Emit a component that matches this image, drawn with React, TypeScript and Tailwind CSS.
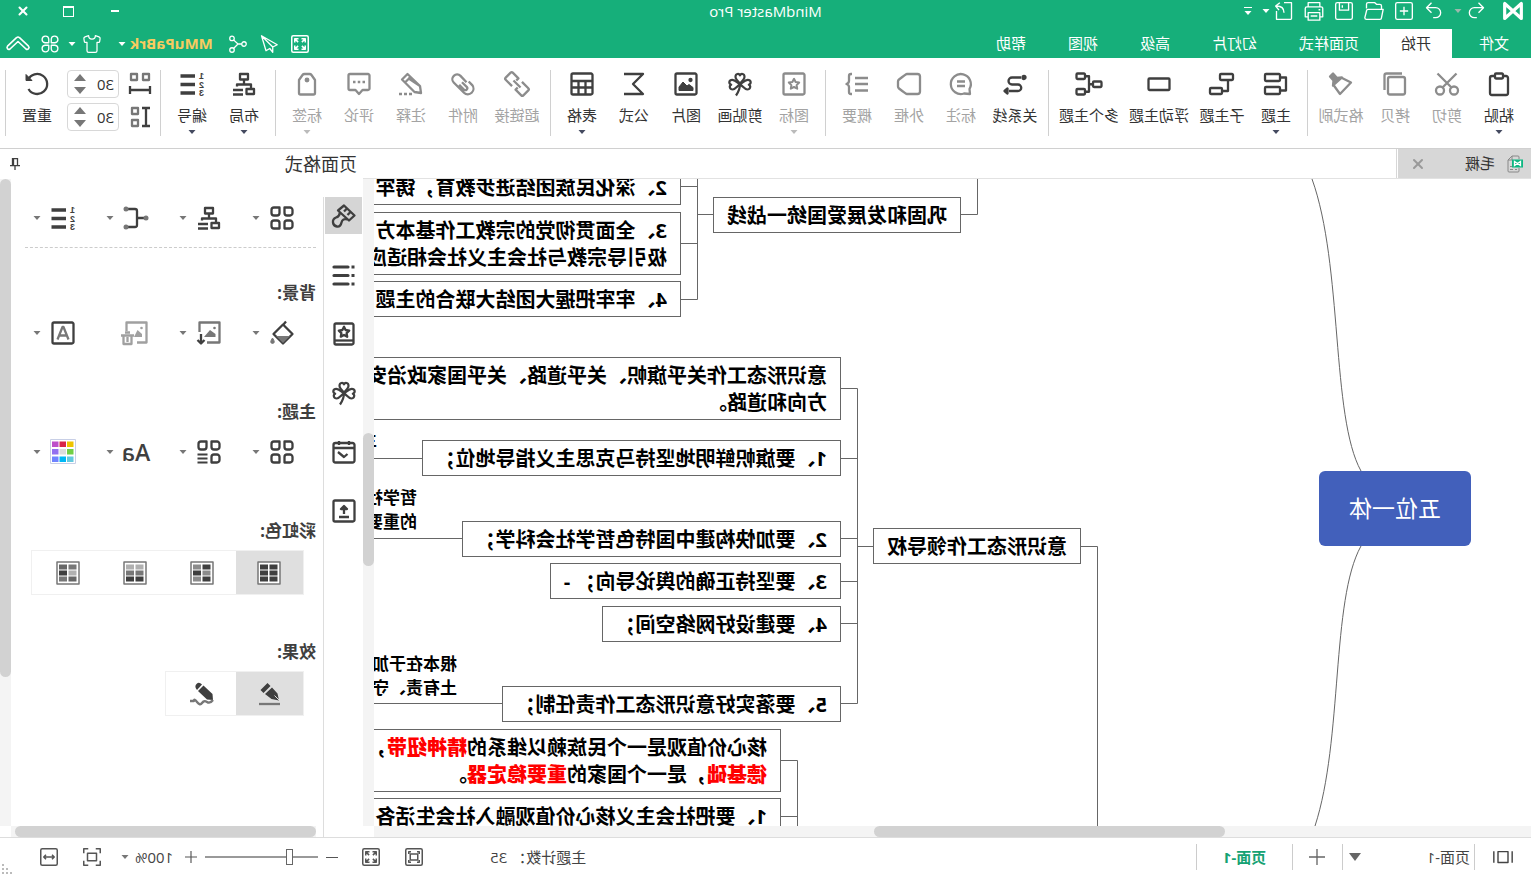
import React, { useState } from 'react';
import { Shirt, X } from 'lucide-react';

interface IcoProps {
  children: React.ReactNode;
  className?: string;
  sw?: number;
}

const Ico: React.FC<IcoProps> = ({ children, className = 'size-6', sw = 2.3 }) => (
  <svg
    viewBox="0 0 24 24"
    className={`${className} shrink-0 overflow-visible`}
    fill="none"
    stroke="currentColor"
    strokeWidth={sw}
    strokeLinejoin="round"
    aria-hidden="true"
  >
    {children}
  </svg>
);

const Caret: React.FC<{ className?: string }> = ({ className = 'text-[#444]' }) => (
  <svg viewBox="0 0 8 4" className={`h-1 w-2 shrink-0 ${className}`} fill="currentColor" aria-hidden="true">
    <path d="M0.5 0h7L4 4z" />
  </svg>
);

const starPath = 'M12 6.8l1.6 3.2 3.6.6-2.6 2.5.6 3.6-3.2-1.7-3.2 1.7.6-3.6-2.6-2.5 3.6-.6z';

const CloverIcon = () => (
  <Ico sw={2.2}>
    <path d="M12 11.5C9.5 9 7.5 7.300 7.500 4.800 7.500 1.500 11 1 12 3.400c1-2.400 4.500-1.900 4.500 1.400 0 2.500-2 4.200-4.500 6.700z" />
    <path d="M12 12.500C9 14 7.500 17.500 4.800 17.500c-3.200 0-4-3.700-1.600-4.800C.2 11.500 1 7.800 4.300 7.800c3 0 4.700 2.500 7.700 4.700zM12 12.500c3 1.500 4.500 5 7.200 5 3.200 0 4-3.700 1.600-4.800 3-1.200 2.200-4.900-1.100-4.900-3 0-4.700 2.500-7.700 4.700z" />
    <path d="M12 12c0 4 1.500 8 4 11.500" />
  </Ico>
);

const LayoutIcon = () => (
  <Ico>
    <path d="M8 2h8v5.500H8zM2 17h7.500v5H2zM12 8v4M5 17v-4.500h14v2M13 18h10M13 22.500h10" />
  </Ico>
);

const NumberIcon = () => (
  <Ico sw={3.3}>
    <path d="M9 4H23.500M9 12.500H23.500M9 21H23.500" />
    <g fill="currentColor" stroke="none" fontFamily="Liberation Sans" fontSize="9" fontWeight="bold">
      <text x="0" y="7">1</text>
      <text x="0" y="15.500">2</text>
      <text x="0" y="24">3</text>
    </g>
  </Ico>
);

const FourIcon: React.FC<{ list?: boolean }> = ({ list }) => (
  <Ico>
    <path d="M1.500 4a2.500 2.500 0 0 1 2.500-2.500h5.500V7A2.500 2.500 0 0 1 7 9.500H4A2.500 2.500 0 0 1 1.500 7zM14.500 1.500H20A2.500 2.500 0 0 1 22.500 4v3A2.500 2.500 0 0 1 20 9.500h-3A2.500 2.500 0 0 1 14.500 7z" />
    <path d="M1.500 17A2.500 2.500 0 0 1 4 14.500h3A2.500 2.500 0 0 1 9.500 17v5.500H4A2.500 2.500 0 0 1 1.500 20z" />
    {list
      ? <path d="M13.500 14.500h10M13.500 18.500h10M13.500 22.500h10" strokeWidth="2" />
      : <path d="M14.500 17a2.500 2.500 0 0 1 2.500-2.500h3a2.500 2.500 0 0 1 2.500 2.500v3a2.500 2.500 0 0 1-2.500 2.500h-5.500z" />}
  </Ico>
);

const FullscreenIcon: React.FC<{ className: string }> = ({ className }) => (
  <Ico className={className} sw={2}>
    <rect x="1" y="1" width="22" height="22" rx="2" />
    <path d="M5 10V5h5M14 5h5v5M19 14v5h-5M10 19H5v-5M5.500 5.500l4 4M18.500 5.500l-4 4M18.500 18.500l-4-4M5.500 18.500l4-4" />
  </Ico>
);

interface Tool {
  label: string;
  icon: React.ReactNode;
  disabled?: boolean;
  caret?: boolean;
}

const toolGroups: Tool[][] = [
  [
    {
      label: '粘贴',
      caret: true,
      icon: <Ico><path d="M8 4H5a2 2 0 0 0-2 2v15a2 2 0 0 0 2 2h14a2 2 0 0 0 2-2V6a2 2 0 0 0-2-2h-3" /><rect x="8" y="1.500" width="8" height="5" rx="1" /></Ico>,
    },
    {
      label: '剪切',
      disabled: true,
      icon: <Ico><path d="M21.500 1.500 7 16M2.500 1.500 17 16" /><circle cx="5" cy="18.500" r="4" /><circle cx="19" cy="18.500" r="4" /></Ico>,
    },
    {
      label: '拷贝',
      disabled: true,
      icon: <Ico><rect x="2" y="5" width="17" height="17.500" rx="2" /><path d="M5 1.500h15.500a2 2 0 0 1 2 2V18" /></Ico>,
    },
    {
      label: '格式刷',
      disabled: true,
      icon: <Ico><path d="M11 6 2 10.500 13 22l6.500-9" /><path d="M11 5.500l5 .5 4-4.500 3 3-3.500 4 .5 5z" fill="currentColor" /></Ico>,
    },
  ],
  [
    { label: '主题', caret: true, icon: <Ico><rect x="8" y="2" width="15" height="7" rx="1" /><rect x="8" y="15" width="15" height="7" rx="1" /><path d="M8 5.500H2v13h6" /></Ico> },
    { label: '子主题', icon: <Ico><rect x="1" y="2" width="13" height="6" rx="1" /><rect x="12" y="16" width="12" height="6" rx="1" /><path d="M6 8v11h6" /></Ico> },
    { label: '浮动主题', icon: <Ico><rect x="1.500" y="6.500" width="21" height="11.500" rx="1" /></Ico> },
    { label: '多个主题', icon: <Ico><rect x="-.5" y="9.500" width="8.500" height="5.500" rx="1" /><rect x="16" y="1.500" width="8.500" height="5.500" rx="1" /><rect x="16" y="17" width="8.500" height="5.500" rx="1" /><path d="M8 12.250h4M16 4.250h-4v15.500h4" /></Ico> },
  ],
  [
    {
      label: '关系线',
      icon: <Ico><path d="M6 5.500h9a3.500 3.500 0 0 1 0 7H9a3.250 3.250 0 0 0 0 6.500h9" /><circle cx="3" cy="5.500" r="1.500" fill="currentColor" /><path d="M19.500 16.500v5l3-2.500z" fill="currentColor" /></Ico>,
    },
    { label: '标注', disabled: true, icon: <Ico><path d="M3 22l.500-5A10 10 0 1 1 9 21.500zM8 9.500h8M8 14h8" /></Ico> },
    { label: '外框', disabled: true, icon: <Ico><path d="M3.500 2H14q1 0 8 5.500 1 .800 1 2v5q0 1.200-1 2-7 5.500-8 5.500H3.500Q1 22 1 19.500v-15Q1 2 3.500 2z" /></Ico> },
    { label: '概要', disabled: true, icon: <Ico><path d="M1 6h13M1 12h13M1 18.500h13M17 2h1q2 0 2 2v5q0 2 2.500 3Q20 13 20 15v5q0 2-2 2h-1" /></Ico> },
  ],
  [
    { label: '图标', disabled: true, caret: true, icon: <Ico><rect x="1.500" y="1.500" width="21" height="21" rx="1.500" /><path d={starPath} strokeWidth="2" /></Ico> },
    { label: '剪贴画', icon: <CloverIcon /> },
    {
      label: '图片',
      icon: <Ico><rect x="1.500" y="1.500" width="21" height="21" rx="1.500" /><circle cx="7.500" cy="8" r="1" fill="currentColor" /><path d="M5 18.500v-3l4-3 2 1.500 4-4 4 5v3.500z" fill="currentColor" strokeWidth="1" /></Ico>,
    },
    { label: '公式', icon: <Ico><path d="M22 2H3l10 10L3 22h19" /></Ico> },
    { label: '表格', caret: true, icon: <Ico><rect x="1.500" y="1.500" width="21" height="21" rx="1.500" /><path d="M2 9h20M2 15.500h20M8.500 9v13M15.500 9v13" /></Ico> },
  ],
  [
    {
      label: '超链接',
      disabled: true,
      icon: <Ico><g transform="rotate(-45 12 12)"><path d="M10 7H1a1.500 1.500 0 0 0-1.500 1.500v7A1.500 1.500 0 0 0 1 17h8v-3M14 17h9a1.500 1.500 0 0 0 1.500-1.500v-7A1.500 1.500 0 0 0 23 7h-8v3M7 12h10" /></g></Ico>,
    },
    {
      label: '附件',
      disabled: true,
      icon: <Ico><path d="M9 10.500l6-6.300a4.700 4.700 0 0 1 6.800 6.600L11.500 21a5.600 5.600 0 0 1-8.200-7.600l3.500-3.600M13.500 10.500l-4.700 4.700a1.900 1.900 0 0 0 2.800 2.700l4.700-4.800" transform="translate(-.5 -.3)" /></Ico>,
    },
    { label: '注释', disabled: true, icon: <Ico><path d="M2 21l1-7L15.500 2l5.500 5.500L8.500 20zM12.500 5l5.500 5.500M3 14l12-8" /><path d="M11 22h3M16 22h3M21 22h3" /></Ico> },
    { label: '评论', disabled: true, icon: <Ico><path d="M3 2h18a1.500 1.500 0 0 1 1.500 1.500v13A1.500 1.500 0 0 1 21 18h-5.500L12 22l-3.500-4H3a1.500 1.500 0 0 1-1.500-1.500v-13A1.500 1.500 0 0 1 3 2z" /><path d="M6 10h2.500M10.750 10h2.500M15.500 10H18" /></Ico> },
    { label: '标签', disabled: true, caret: true, icon: <Ico><path d="M4 8l3.500-5q.7-1 2-1h5q1.300 0 2 1L20 8v13a1.500 1.500 0 0 1-1.500 1.500h-13A1.500 1.500 0 0 1 4 21z" /><circle cx="12" cy="8" r="1.300" fill="currentColor" /></Ico> },
  ],
  [
    { label: '布局', caret: true, icon: <LayoutIcon /> },
    { label: '编号', caret: true, icon: <NumberIcon /> },
  ],
];

const Separator = () => <div className="mx-[5px] mt-3 h-[66px] w-px shrink-0 bg-[#d0d0d0]" />;

const ToolButton: React.FC<{ tool: Tool }> = ({ tool }) => {
  const width = tool.label.length === 4 ? 'w-[70px]' : tool.label.length === 3 ? 'w-14' : 'w-13';
  const color = tool.disabled ? 'text-[#8c8c8c]' : 'text-[#3f3f3f]';
  return (
    <button className={`flex shrink-0 flex-col items-center pt-[14px] ${width} ${color}`}>
      {tool.icon}
      <span className={`mt-2 text-[15px] leading-[22px] whitespace-nowrap ${tool.disabled ? 'text-[#a3a3a3]' : 'text-[#333]'}`}>{tool.label}</span>
      {tool.caret && <Caret className={tool.disabled ? 'mt-1 text-[#bbb]' : 'mt-1 text-[#444a60]'} />}
    </button>
  );
};

const Spinner: React.FC<{ label: string; icon: React.ReactNode }> = ({ label, icon }) => {
  const [value, setValue] = useState(30);
  return (
    <div className="flex items-center gap-[9px] text-[#3f3f3f]">
      {icon}
      <div className="flex h-7 w-[52px] items-center rounded border border-[#d8d8d8] px-1">
        <input
          aria-label={label}
          value={value}
          onChange={(e) => setValue(Number(e.target.value) || 0)}
          className="w-7 bg-transparent text-[15px] text-[#333] outline-none"
        />
        <div className="flex flex-col gap-[6px] text-[#777]">
          <button aria-label={`${label} +`} onClick={() => setValue(value + 1)}>
            <svg viewBox="0 0 12 7" className="h-[7px] w-3" fill="currentColor"><path d="M0 7 6 0l6 7z" /></svg>
          </button>
          <button aria-label={`${label} -`} onClick={() => setValue(value - 1)}>
            <svg viewBox="0 0 12 7" className="h-[7px] w-3" fill="currentColor"><path d="M0 0l6 7 6-7z" /></svg>
          </button>
        </div>
      </div>
    </div>
  );
};

const menuTabs = ['文件', '开始', '页面样式', '幻灯片', '高级', '视图', '帮助'];

const Header = () => (
  <header className="flex h-[58px] shrink-0 flex-col justify-between bg-[#16af7a] text-white">
    <div className="grid h-[22px] grid-cols-[1fr_auto_1fr] items-center">
      <div className="flex items-center gap-2.5 pl-2">
        <Ico className="size-5" sw={3.8}><path d="M2 3v18L22 3v18L2 3z" /></Ico>
        <button aria-label="Undo" className="ml-[7px] flex items-center gap-1">
          <Ico className="size-5" sw={1.6}><path d="M9 2 3 8l6 6M3.500 8H14a6 6 0 0 1 0 12h-3" /></Ico>
          <Caret className="text-[#9db8ad]" />
        </button>
        <button aria-label="Redo"><Ico className="size-5" sw={1.6}><path d="M15 2l6 6-6 6M20.500 8H10a6 6 0 0 0 0 12h3" /></Ico></button>
        <button aria-label="New"><Ico className="size-5" sw={1.6}><rect x="2" y="2" width="20" height="20" rx="2" /><path d="M12 7v10M7 12h10" /></Ico></button>
        <button aria-label="Open"><Ico className="size-5" sw={1.6}><path d="M3 10V6a2 2 0 0 1 2-2h4l2-2h8a2 2 0 0 1 2 2v5M1 10h18a2 2 0 0 1 2 2l2 8a2 2 0 0 1-2 2H5a2 2 0 0 1-2-2z" /></Ico></button>
        <button aria-label="Save"><Ico className="size-5" sw={1.6}><rect x="2" y="2" width="20" height="20" rx="2" /><path d="M6.500 2v9h11V2M14 5v3" /></Ico></button>
        <button aria-label="Print"><Ico className="size-5" sw={1.6}><path d="M5 7V2h14v5M5 19H1.500V9A2 2 0 0 1 3.500 7h17a2 2 0 0 1 2 2v10H19M5 14h14v9H5zM8 18h8M4.500 10.500h2" /></Ico></button>
        <button aria-label="Export" className="flex items-center gap-1">
          <Ico className="size-5" sw={1.6}><path d="M12 2H3v19a1 1 0 0 0 1 1h17V12M12 14c0-5 3-8 9-8M17 2l5 4-4 5" /></Ico>
          <Caret className="text-white" />
        </button>
        <button aria-label="More" className="flex flex-col items-center gap-[3px]">
          <span className="h-px w-2 bg-white" />
          <Caret className="text-white" />
        </button>
      </div>
      <h1 className="text-[15px] leading-[22px]">MindMaster Pro</h1>
      <div className="flex justify-end">
        <button aria-label="Minimize" className="flex w-[46px] justify-center pt-1.5"><span className="h-0.5 w-2 bg-white" /></button>
        <button aria-label="Maximize" className="flex w-[46px] items-center justify-center"><span className="h-[11px] w-[11px] border border-t-2 border-white" /></button>
        <button aria-label="Close" className="flex w-[46px] items-center justify-center"><X className="size-[14px]" strokeWidth={3.5} /></button>
      </div>
    </div>

    <div className="flex h-[29px] items-center justify-between">
      <nav className="flex h-full pl-px">
        {menuTabs.map((tab, i) => (
          <button
            key={tab}
            className={`h-full px-[21px] text-[15px] first:mr-1.5 ${i === 1 ? 'bg-white text-[#333]' : ''}`}
          >
            {tab}
          </button>
        ))}
      </nav>
      <div className="flex items-center pr-1.5">
        <button aria-label="Fullscreen" className="flex w-[31px] justify-center"><FullscreenIcon className="size-[18px]" /></button>
        <button aria-label="Send" className="flex w-[31px] justify-center">
          <Ico className="size-[18px]" sw={1.7}><path d="M22 1 1 13l6 3v7l4-5 5 3zM22 1 7 16" /></Ico>
        </button>
        <button aria-label="Share" className="flex w-[31px] justify-center">
          <Ico className="size-[18px]" sw={1.7}><circle cx="4" cy="12" r="3" /><circle cx="20" cy="4.500" r="3" /><circle cx="20" cy="20" r="3" /><path d="M7 12h5l6-5.500M12 12l6 6" /></Ico>
        </button>
        <button className="ml-2.5 flex items-center gap-1 text-[15px] font-bold text-[#f9cb5f]">
          MMuPaBrk
          <Caret className="text-white" />
        </button>
        <button aria-label="Theme" className="ml-4 flex items-center gap-1.5">
          <Shirt className="size-5" strokeWidth={1.5} />
          <Caret className="text-white" />
        </button>
        <button aria-label="Apps" className="ml-2">
          <Ico className="size-5" sw={1.6}><path d="M10.500 10.500H6A4 4 0 1 1 10.500 6zM13.500 10.500H18A4 4 0 1 0 13.500 6zM10.500 13.500H6a4 4 0 1 0 4.500 4.500zM13.500 13.500H18a4 4 0 1 1-4.500 4.500z" /></Ico>
        </button>
        <button aria-label="Collapse ribbon" className="ml-2.5">
          <Ico className="size-6" sw={1.6}><path d="M12 5q.8 0 1.500.7l9 8.500q1 1.200 0 2.500t-2.500.3L12 9.500 4 17q-1.300 1-2.500-.3t0-2.500l9-8.500Q11.200 5 12 5z" /></Ico>
        </button>
      </div>
    </div>
  </header>
);

const Ribbon = () => (
  <div className="flex h-[91px] shrink-0 items-start border-b border-[#d0d0d0] bg-white pl-1.5">
    {toolGroups.map((group, i) => (
      <React.Fragment key={i}>
        {group.map((tool) => <ToolButton key={tool.label} tool={tool} />)}
        <Separator />
      </React.Fragment>
    ))}
    <div className="flex flex-col gap-[5px] pt-3 pl-[3px]">
      <Spinner
        label="水平间距"
        icon={<Ico><path d="M3 2h6v6H3zM15 2h6v6h-6z" stroke="#777" /><path d="M2 14v8M22 14v8M2 18h20" /></Ico>}
      />
      <Spinner
        label="垂直间距"
        icon={<Ico><path d="M14 3h6v6h-6zM14 15h6v6h-6z" stroke="#777" /><path d="M2 3h8M2 21h8M6 3v18" /></Ico>}
      />
    </div>
    <button className="ml-1 flex w-13 flex-col items-center pt-[14px] text-[#3f3f3f]">
      <Ico><path d="M20.500 17A10 10 0 1 1 21 8" /><path d="M17 8.500h6v-6z" fill="currentColor" strokeWidth="1" /></Ico>
      <span className="mt-2 text-[15px] leading-[22px] text-[#333]">重置</span>
    </button>
    <Separator />
  </div>
);

interface MapNode {
  place: string;
  lines: React.ReactNode[];
}

// positions on the free canvas
const nodes: MapNode[] = [
  { place: 'left-[570px] top-[18px]', lines: ['巩固和发展爱国统一战线'] },
  { place: 'left-[850px] top-[-10px] w-[400px]', lines: ['2、深化民族团结进步教育，铸牢'] },
  { place: 'left-[850px] top-[33px] w-[400px]', lines: ['3、全面贯彻党的宗教工作基本方', '极引导宗教与社会主义社会相适应'] },
  { place: 'left-[850px] top-[102px] w-[400px]', lines: ['4、牢牢把握大团结大联合的主题'] },
  { place: 'left-[690px] top-[178px] w-[560px]', lines: ['意识形态工作关乎旗帜、关乎道路、关乎国家政治安', '方向和道路。'] },
  { place: 'left-[690px] top-[261px]', lines: ['1、要旗帜鲜明地坚持马克思主义指导地位；'] },
  { place: 'left-[690px] top-[342px]', lines: ['2、要加快构建中国特色哲学社会科学；'] },
  { place: 'left-[690px] top-[384px]', lines: ['3、要坚持正确的舆论导向； -'] },
  { place: 'left-[690px] top-[427px]', lines: ['4、要建设好网络空间；'] },
  { place: 'left-[690px] top-[507px]', lines: ['5、要落实好意识形态工作责任制；'] },
  { place: 'left-[450px] top-[349px]', lines: ['意识形态工作领导权'] },
  {
    place: 'left-[750px] top-[550px] w-[500px]',
    lines: [
      <>核心价值观是一个民族赖以维系的<b className="text-[#f00]">精神纽带</b>，</>,
      <><b className="text-[#f00]">德基础</b>，是一个国家的<b className="text-[#f00]">重要稳定器</b>。</>,
    ],
  },
  { place: 'left-[750px] top-[619px] w-[500px]', lines: ['1、要把社会主义核心价值观融入社会生活各'] },
];

const notes = [
  { place: 'left-[1154px] top-[249px]', lines: ['主'] },
  { place: 'left-[1114px] top-[307px]', lines: ['哲学社', '的重要'] },
  { place: 'left-[1074px] top-[473px]', lines: ['根本在于加', '土有责、守'] },
];

const MindMap = () => (
  <div className="relative min-h-0 min-w-0 flex-1 overflow-hidden bg-white text-black">
    <svg className="absolute inset-0 h-full w-full" fill="none" stroke="#666" aria-hidden="true">
      <path d="M170 292C200 238 188 86 219 0M170 367C200 421 188 561 216 647" />
      <path d="M553.500 0v35.500H570M818 35.500h15.500M833.500 0v120.500H850M833.500 7.500H850M833.500 64.500H850" />
      <path d="M450 367.500h-16.500V660M658 367.500h15.500" />
      <path d="M690 209.500h-16.500v315H690M673.500 279.500H690M673.500 359.500H690M673.500 402.500H690M673.500 444.500H690" />
      <path d="M1100 279.500h60M1060 359.500h100M1020 524.500h140" />
      <path d="M750 581.500h-16.500V660M733.500 637.500H750" />
    </svg>
    {nodes.map((node) => (
      <div
        key={node.place}
        className={`absolute border border-[#666] bg-white px-[13px] pt-1 pb-[3px] text-[20px] leading-[27px] font-bold whitespace-nowrap ${node.place}`}
      >
        {node.lines.map((line, i) => <p key={i}>{line}</p>)}
      </div>
    ))}
    {notes.map((note) => (
      <div key={note.place} className={`absolute text-[17px] leading-6 font-bold whitespace-nowrap ${note.place}`}>
        {note.lines.map((line) => <p key={line}>{line}</p>)}
      </div>
    ))}
    <div className="absolute top-[292px] left-[60px] flex h-[75px] w-[152px] items-center justify-center rounded-md bg-[#4260bb] text-[23px] text-white">
      五位一体
    </div>
  </div>
);

const Workspace = () => (
  <section className="flex min-w-0 flex-1 flex-col">
    <div className="flex h-[30px] shrink-0 border-b border-[#e2e2e2]">
      <div className="flex w-[135px] items-center border-r border-[#d7d7d7]">
        <div className="flex h-full w-[133px] items-center bg-[#d7d7d7] pr-3 pl-2">
          <svg viewBox="0 0 16 18" className="h-[18px] w-4" fill="none" stroke="#888" aria-hidden="true">
            <path d="M4 4V2q0-1 1-1h6l4 4v11q0 1-1 1H5q-1 0-1-1v-3M11 1v4h4M6 14.500h2M10 14.500h3M10 11.500h3" />
            <rect x="0" y="4.500" width="11" height="8" fill="#0fb782" stroke="none" />
            <path d="M2.500 6.500v4l6-4v4z" stroke="#fff" strokeWidth="1.300" />
          </svg>
          <span className="ml-3 text-[15px] text-[#333]">毛概</span>
          <button aria-label="Close tab" className="ml-auto text-[#999]"><X className="size-4" strokeWidth={3} /></button>
        </div>
      </div>
    </div>
    <div className="flex min-h-0 flex-1">
      <MindMap />
      <div className="w-[11px] shrink-0 bg-[#f4f4f4] pt-[254px]"><div className="h-[133px] rounded-full bg-[#d2d2d2]" /></div>
    </div>
    <div className="mr-[11px] h-[11px] shrink-0 bg-[#f4f4f4] pl-[306px]"><div className="h-full w-[351px] rounded-full bg-[#d2d2d2]" /></div>
  </section>
);

const sideIcons = [
  <Ico><path d="M12 1.500 1.500 11.500l5.500 5 11-10zM5.500 8l3 3M9 4.500l3 3" /><path d="M16 8.500q.500 4 4 5 3.500 1.500 3 5t-4 4-4.500-4-6-3" /></Ico>,
  <Ico sw={3.2}><path d="M8 4h14M8 12.500h14M8 21h14" strokeLinecap="round" /><path d="M1.500 4h3M1.500 12.500h3M1.500 21h3" /></Ico>,
  <Ico><rect x="2.500" y="1.500" width="19" height="21" rx="1.500" /><path d="M3 18.500h18" /><path d={starPath} transform="translate(0 -2)" /></Ico>,
  <CloverIcon />,
  <Ico><rect x="1.500" y="3" width="21" height="19.500" rx="2" /><path d="M2 8h20M7 1v4M17 1v4M18 12l-6 5-3.500-3" /></Ico>,
  <Ico><rect x="1.500" y="1.500" width="21" height="21" rx="1.500" /><path d="M7 18h10M12 15V8" /><path d="M9 10l3-3 3 3z" fill="currentColor" /></Ico>,
];

interface PanelItem {
  name: string;
  icon: React.ReactNode;
  caret?: boolean;
}

const structureItems: PanelItem[] = [
  { name: 'Structure', icon: <FourIcon />, caret: true },
  { name: 'Layout', icon: <LayoutIcon />, caret: true },
  {
    name: 'Connector',
    caret: true,
    icon: <Ico><path d="M2 12h9M20 3h-7q-2 0-2 2v14q0 2 2 2h7" /><g fill="#777" stroke="none"><circle cx="2" cy="12" r="2.500" /><circle cx="22" cy="3" r="2.500" /><circle cx="22" cy="21" r="2.500" /></g></Ico>,
  },
  { name: 'Numbering', icon: <NumberIcon />, caret: true },
];

const backgroundItems: PanelItem[] = [
  {
    name: 'Fill',
    caret: true,
    icon: <Ico><path d="M8 .500l3 3.500M1.500 13 11 3.500l9.500 9.500L11 22.500z" /><path d="M4 15h14l-7 7z" fill="#777" stroke="none" /><path d="M21.500 17q3.500 5 0 5.500-3.500-.5 0-5.500z" fill="#777" stroke="#777" strokeWidth="1" /></Ico>,
  },
  {
    name: 'Picture',
    caret: true,
    icon: <Ico><path d="M14 21.500H1.500v-20h20V11" stroke="#777" /><path d="M5.500 16v-3l5.500-4 6 7z" fill="#777" stroke="none" /><circle cx="6.500" cy="7" r="1.300" fill="#777" stroke="none" /><path d="M20 13v9M16.500 19l3.500 3.500 3.500-3.500" /></Ico>,
  },
  {
    name: 'Remove picture',
    icon: <Ico className="size-6 text-[#a0a0a0]"><path d="M11 21.500H1.500v-20h20V10" /><path d="M6 16v-3l4.500-4 3.500 7z" fill="currentColor" stroke="none" /><circle cx="6.500" cy="7" r="1.300" fill="currentColor" stroke="none" /><path d="M14 14.500h13M18 11.500h5M16.500 15v8h8v-8M20.500 16v5" /></Ico>,
  },
  {
    name: 'Watermark',
    caret: true,
    icon: <Ico><rect x="1.500" y="1.500" width="21" height="21" rx="1.500" /><path d="M6.500 18.500 11.500 6h1l5 12.500M8.500 14.500h7" stroke="#777" /></Ico>,
  },
];

const swatches = ['#efc400', '#d92648', '#bd4fc9', '#71cf45', '#dcdcdc', '#9370f0', '#63c9de', '#00b8f5', '#6f83ff'];

const themeItems: PanelItem[] = [
  { name: 'Theme', icon: <FourIcon />, caret: true },
  { name: 'Theme layout', icon: <FourIcon list />, caret: true },
  { name: 'Theme font', icon: <span className="text-[23px] leading-6 font-semibold">Aa</span>, caret: true },
  {
    name: 'Theme color',
    caret: true,
    icon: (
      <Ico sw={1}>
        <rect x="-.5" y="-.5" width="25" height="24" fill="#fff" stroke="#c8cfe6" />
        {swatches.map((c, i) => (
          <rect key={c} x={1.5 + (i % 3) * 7.5} y={1.5 + Math.floor(i / 3) * 7.5} width="6.500" height="5.500" fill={c} stroke="none" />
        ))}
      </Ico>
    ),
  },
];

const rainbowFills = [
  ['#3f3f3f', '#3f3f3f', '#3f3f3f', '#3f3f3f', '#3f3f3f', '#3f3f3f'],
  ['#3f3f3f', '#8c8c8c', '#8c8c8c', '#3f3f3f', '#3f3f3f', '#8c8c8c'],
  ['#b0b0b0', '#b0b0b0', '#777', '#777', '#3f3f3f', '#3f3f3f'],
  ['#777', '#666', '#b0b0b0', '#3f3f3f', '#666', '#777'],
];

const RainbowIcon: React.FC<{ fills: string[] }> = ({ fills }) => (
  <Ico sw={1.5}>
    <rect x="1" y="1" width="22" height="22" fill="#fff" stroke="#777" />
    {fills.map((c, i) => (
      <rect key={i} x={3.5 + (i % 2) * 9.5} y={3.5 + Math.floor(i / 2) * 6} width="8" height="5" fill={c} stroke="none" />
    ))}
  </Ico>
);

const PanelRow: React.FC<{ items: PanelItem[] }> = ({ items }) => (
  <div className="flex h-6 pl-[22px]">
    {items.map((item) => (
      <button key={item.name} aria-label={item.name} className="flex w-[73px] shrink-0 items-center gap-2.5 text-[#3f3f3f]">
        <span className="flex w-6 justify-center">{item.icon}</span>
        {item.caret && <Caret className="text-[#777]" />}
      </button>
    ))}
  </div>
);

const PanelTitle: React.FC<{ children: React.ReactNode }> = ({ children }) => (
  <h3 className="text-[17px] leading-6 font-bold text-[#3f3f3f]">{children}</h3>
);

const Segment: React.FC<{ icons: React.ReactNode[]; name: string }> = ({ icons, name }) => {
  const [active, setActive] = useState(0);
  return (
    <div className="ml-3 flex w-fit border border-[#f0f0f0] pr-[3px]">
      {icons.map((icon, i) => (
        <button
          key={i}
          aria-label={`${name} ${i + 1}`}
          onClick={() => setActive(i)}
          className={`flex h-[43px] w-[67px] items-center justify-center text-[#3f3f3f] ${active === i ? 'bg-[#dfdfdf]' : ''}`}
        >
          {icon}
        </button>
      ))}
    </div>
  );
};

const FormatPanel = () => (
  <aside className="flex w-[363px] shrink-0 flex-col">
    <div className="flex h-[30px] shrink-0 items-center justify-between pr-2.5 pl-1.5">
      <h2 className="text-[18px] text-[#333]">页面格式</h2>
      <button aria-label="Pin" className="text-[#3f3f3f]">
        <svg viewBox="0 0 10 12" className="h-3 w-[10px]" fill="none" stroke="currentColor" strokeWidth="1.300" aria-hidden="true">
          <path d="M2.500 7.500V.7h5v6.800M6.500 1v6.500M0 7.700h10M5 8v4" />
        </svg>
      </button>
    </div>
    <div className="flex min-h-0 flex-1">
      <div className="mt-[18px] flex w-10 shrink-0 flex-col gap-[22px] border-r border-[#ddd] pl-px">
        {sideIcons.map((icon, i) => (
          <button key={i} aria-label={`Panel ${i + 1}`} className={`flex h-[37px] w-[37px] items-center justify-center pr-px text-[#3f3f3f] ${i === 0 ? 'bg-[#d5d5d5]' : ''}`}>
            {icon}
          </button>
        ))}
      </div>
      <div className="flex min-w-0 flex-1 flex-col">
        <div className="flex min-h-0 flex-1">
          <div className="flex min-w-0 flex-1 flex-col pl-[7px]">
            <div className="mr-[14px] h-[69px] border-b border-dashed border-[#ccc] pt-[27px]"><PanelRow items={structureItems} /></div>
            <div className="mt-[33px] flex flex-col gap-4">
              <PanelTitle>背景:</PanelTitle>
              <PanelRow items={backgroundItems} />
            </div>
            <div className="mt-[55px] flex flex-col gap-4">
              <PanelTitle>主题:</PanelTitle>
              <PanelRow items={themeItems} />
            </div>
            <div className="mt-[55px] flex flex-col gap-[7px]">
              <PanelTitle>彩虹色:</PanelTitle>
              <Segment name="Rainbow" icons={rainbowFills.map((f, i) => <RainbowIcon key={i} fills={f} />)} />
            </div>
            <div className="mt-[45px] flex flex-col gap-[7px]">
              <PanelTitle>效果:</PanelTitle>
              <Segment
                name="Effect"
                icons={[
                  <Ico><path d="M2 18.500l1.500-7L9 5.500l7 6.500-6.500 5zM10.500 4l3-3 7 7-3 3z" fill="currentColor" stroke="none" /><path d="M2 18l4.500-4.500" stroke="#dfdfdf" strokeWidth="1" /><path d="M1 22h21" stroke="#777" /></Ico>,
                  <Ico><path d="M1 18l.500-6L10.500 3.500 16 9 7 17.500z" fill="currentColor" stroke="none" /><path d="M12 2.500q3-3 5.500-.5t-.5 6z" fill="currentColor" stroke="none" /><path d="M1 18q3 4 6 2t5 1 5-1 3-1h4" stroke="#777" /></Ico>,
                ]}
              />
            </div>
          </div>
          <div className="w-[11px] shrink-0 bg-[#f4f4f4]"><div className="h-[498px] rounded-full bg-[#d2d2d2]" /></div>
        </div>
        <div className="mr-[11px] ml-[7px] h-[11px] shrink-0 bg-[#f4f4f4] pr-1"><div className="h-full rounded-full bg-[#d2d2d2]" /></div>
      </div>
    </div>
  </aside>
);

const StatusBar = () => {
  const [zoom, setZoom] = useState(24);
  return (
    <footer className="flex h-[39px] shrink-0 items-center border-t border-[#ddd] bg-white text-[15px] text-[#444]">
      <button aria-label="Outline view" className="flex w-14 justify-center">
        <Ico className="size-5" sw={1.7}><path d="M6 5.500h12v13H6zM1 5v14M23 5v14" /></Ico>
      </button>
      <div className="flex h-[26px] w-[133px] items-center border-x border-[#ccc] pr-1.5 pl-1">
        <select aria-label="Page" className="min-w-0 flex-1 appearance-none bg-transparent outline-none">
          <option>页面-1</option>
        </select>
        <svg viewBox="0 0 12 8" className="h-2 w-3" fill="#666" aria-hidden="true"><path d="M0 0h12L6 8z" /></svg>
      </div>
      <button aria-label="Add page" className="flex h-[26px] w-[49px] items-center justify-center">
        <Ico className="size-4 text-[#666]" sw={2}><path d="M12 0v24M0 12h24" /></Ico>
      </button>
      <button className="h-[26px] w-[97px] border-x border-[#ccc] font-bold text-[#16a273]">页面-1</button>
      <div className="ml-auto flex items-center pr-10">
        <span>主题计数： 35</span>
        <div className="ml-[67px] flex items-center gap-[25px] text-[#555]">
          <button aria-label="Fit selection"><Ico className="size-[18px]" sw={2}><rect x="1" y="1" width="22" height="22" rx="2" /><path d="M7 8h10v8H7zM5 8V5h3M16 5h3v3M19 16v3h-3M8 19H5v-3" /></Ico></button>
          <button aria-label="Fullscreen"><FullscreenIcon className="size-[18px]" /></button>
        </div>
        <button aria-label="Zoom out" className="ml-6 flex h-4 w-3 items-center"><span className="h-px w-full bg-[#555]" /></button>
        <input
          type="range"
          aria-label="Zoom"
          value={zoom}
          onChange={(e) => setZoom(Number(e.target.value))}
          className="mx-2 h-4 w-[113px] appearance-none bg-transparent [&::-webkit-slider-runnable-track]:h-0.5 [&::-webkit-slider-runnable-track]:bg-[#999] [&::-webkit-slider-thumb]:-mt-[7px] [&::-webkit-slider-thumb]:h-4 [&::-webkit-slider-thumb]:w-[7px] [&::-webkit-slider-thumb]:appearance-none [&::-webkit-slider-thumb]:border [&::-webkit-slider-thumb]:border-[#666] [&::-webkit-slider-thumb]:bg-white"
        />
        <button aria-label="Zoom in"><Ico className="size-3 text-[#555]"><path d="M12 0v24M0 12h24" /></Ico></button>
        <button className="ml-3 flex items-center gap-1.5">100%<Caret className="text-[#777]" /></button>
        <div className="ml-5 flex items-center gap-[25px] text-[#555]">
          <button aria-label="Fit page"><Ico className="size-[18px]" sw={2}><path d="M1 7V1h6M17 1h6v6M23 17v6h-6M7 23H1v-6M6 7h12v10H6z" /></Ico></button>
          <button aria-label="Fit width"><Ico className="size-[18px]" sw={2}><rect x="1" y="1" width="22" height="22" rx="2" /><path d="M4.500 12h15M8 9l-3 3 3 3M16 9l3 3-3 3" /></Ico></button>
        </div>
      </div>
      <svg viewBox="0 0 10 10" className="absolute right-0.5 bottom-0.5 size-2.5" fill="#bbb" aria-hidden="true">
        <path d="M8 0h2v2H8zM8 4h2v2H8zM4 4h2v2H4zM8 8h2v2H8zM4 8h2v2H4zM0 8h2v2H0z" />
      </svg>
    </footer>
  );
};

export default function App() {
  return (
    <div className="relative flex h-screen -scale-x-100 flex-col overflow-hidden bg-white font-['Open_Sans','Noto_Sans_CJK_SC',sans-serif]">
      <Header />
      <Ribbon />
      <main className="flex min-h-0 flex-1">
        <Workspace />
        <FormatPanel />
      </main>
      <StatusBar />
    </div>
  );
}
